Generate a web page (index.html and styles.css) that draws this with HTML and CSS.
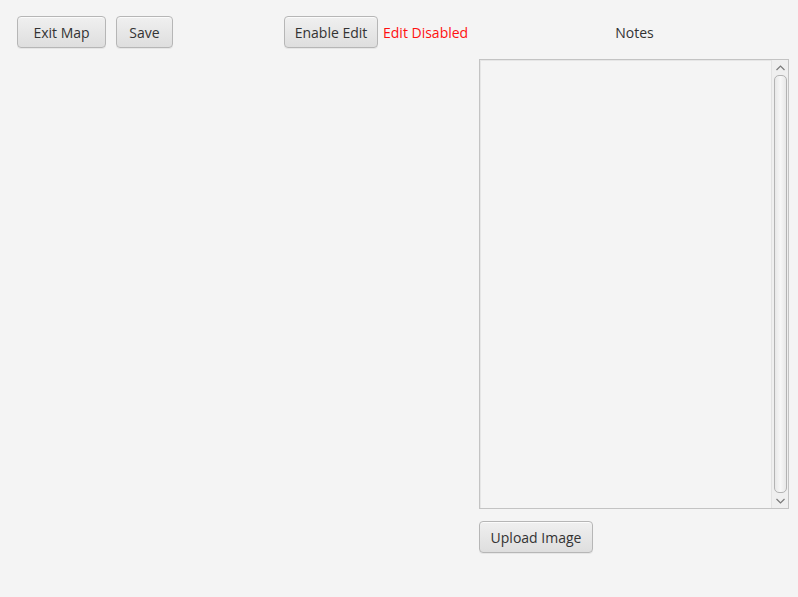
FILE: index.html
```html
<!DOCTYPE html>
<html>
<head>
<meta charset="utf-8">
<link rel="stylesheet" href="styles.css">
</head>
<body>
<div class="app">
  <div class="left">
    <div class="toolbar">
      <button class="btn btn-exit">Exit Map</button>
      <button class="btn btn-save">Save</button>
      <button class="btn btn-edit">Enable Edit</button>
      <span class="status">Edit Disabled</span>
    </div>
  </div>
  <div class="right">
    <div class="notes-title">Notes</div>
    <div class="notes-area">
      <div class="notes-text"></div>
      <div class="vscroll">
        <div class="arrow arrow-up">
          <svg width="9" height="6" viewBox="0 0 9 6"><path d="M0.5 5 L4.5 1 L8.5 5" fill="none" stroke="#7a7a7a" stroke-width="1.2"/></svg>
        </div>
        <div class="thumb"></div>
        <div class="arrow arrow-down">
          <svg width="9" height="6" viewBox="0 0 9 6"><path d="M0.5 1 L4.5 5 L8.5 1" fill="none" stroke="#7a7a7a" stroke-width="1.2"/></svg>
        </div>
      </div>
    </div>
    <button class="btn btn-upload">Upload Image</button>
  </div>
</div>
</body>
</html>
```
FILE: styles.css
```css
html, body {
  margin: 0;
  padding: 0;
  background: #f4f4f4;
  width: 798px;
  height: 597px;
  overflow: hidden;
}
body {
  font-family: "Open Sans", "Noto Sans", sans-serif;
  font-size: 14px;
  color: #333333;
}
.app {
  display: flex;
  padding: 16px 0 0 17px;
}
.left {
  width: 462px;
}
.toolbar {
  display: flex;
  align-items: center;
  height: 32px;
}
.btn {
  box-sizing: border-box;
  height: 32px;
  padding: 0;
  font-family: inherit;
  font-size: 14px;
  color: #333333;
  border: 1px solid #b6b6b6;
  border-radius: 4px;
  background: linear-gradient(#f0f0f0, #dedede);
  box-shadow: inset 0 1px 0 #fbfbfb, 0 1px 0 #e6e6e6;
  display: flex;
  align-items: center;
  justify-content: center;
}
.btn-exit { width: 89px; }
.btn-save { width: 57px; margin-left: 10px; }
.btn-edit { width: 94px; margin-left: 111px; }
.status {
  margin-left: 5px;
  color: #ff1010;
  white-space: nowrap;
}
.right {
  width: 310px;
  display: flex;
  flex-direction: column;
}
.notes-title {
  height: 32px;
  display: flex;
  align-items: center;
  justify-content: center;
  padding-left: 1px;
}
.notes-area {
  box-sizing: border-box;
  margin-top: 11px;
  width: 310px;
  height: 450px;
  border: 1px solid #c3c3c3;
  box-shadow: inset 1px 1px 0 #e6e6e6;
  background: #f4f4f4;
  display: flex;
}
.notes-text {
  flex: 1;
}
.vscroll {
  width: 16px;
  background: #efefef;
  border-left: 1px solid #e2e2e2;
  display: flex;
  flex-direction: column;
  align-items: center;
}
.arrow {
  height: 15px;
  display: flex;
  align-items: center;
  justify-content: center;
}
.arrow-up { padding-top: 0; }
.thumb {
  box-sizing: border-box;
  flex: 1;
  width: 13px;
  margin-left: 1px;
  border: 1px solid #b3b3b3;
  border-radius: 5px;
  background: linear-gradient(90deg, #e8e8e8, #f7f7f7 50%, #e8e8e8);
}
.btn-upload {
  width: 114px;
  margin-top: 12px;
}
```
